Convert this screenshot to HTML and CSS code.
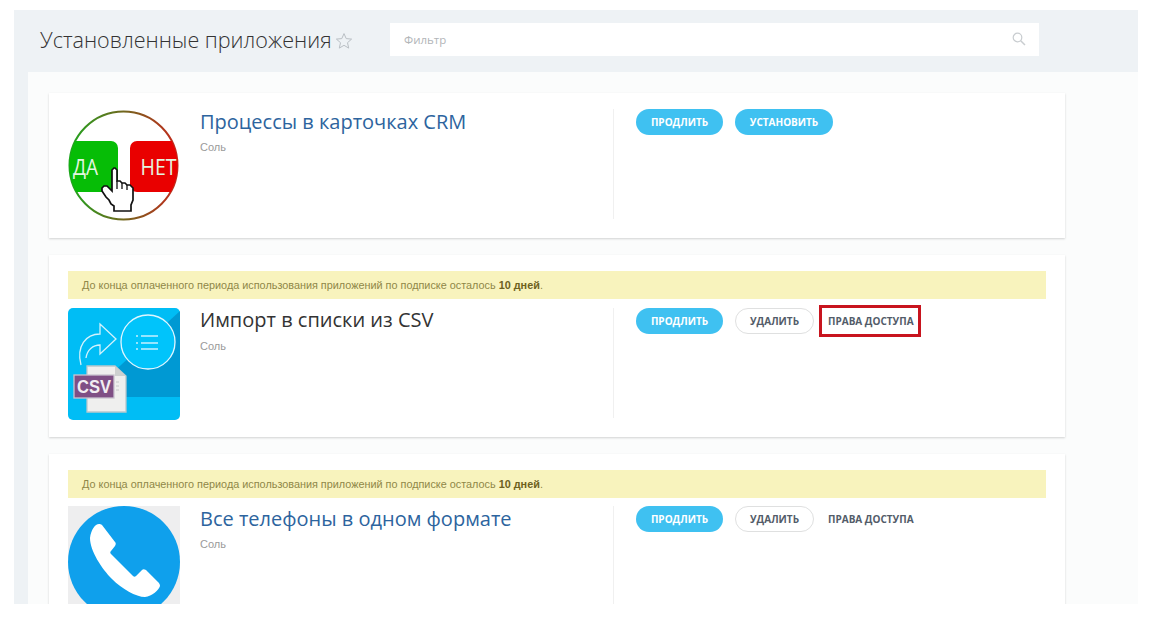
FILE: index.html
```html
<!DOCTYPE html>
<html lang="ru">
<head>
<meta charset="utf-8">
<title>Установленные приложения</title>
<link rel="stylesheet" href="styles.css">
</head>
<body>
<div class="window">
  <header class="top">
    <h1 class="page-title">Установленные приложения</h1>
    <svg class="star" viewBox="0 0 18 18" width="18" height="18"><path d="M9 1.6l2.2 5 5.4.5-4.1 3.6 1.2 5.4L9 13.300l-4.700 2.800 1.200-5.400L1.400 7.100l5.400-.5z" fill="none" stroke="#b9bfc4" stroke-width="1"/></svg>
    <div class="filter">
      <span class="filter-text">Фильтр</span>
      <svg class="search" viewBox="0 0 14 14" width="14" height="14"><circle cx="5.500" cy="5.500" r="4.300" fill="none" stroke="#c9cdd0" stroke-width="1.200"/><path d="M8.700 8.700l4.300 4.300" stroke="#c9cdd0" stroke-width="1.500"/></svg>
    </div>
  </header>
  <main class="content">
    <section class="card">
      <div class="row">
        <svg class="thumb" viewBox="0 0 112 112" width="112" height="112">
          <defs>
            <linearGradient id="ring" x1="0" x2="1" y1="0" y2="0"><stop offset="0" stop-color="#1fa51f"/><stop offset="1" stop-color="#c4281c"/></linearGradient>
            <clipPath id="disc"><circle cx="55.500" cy="56.500" r="54"/></clipPath>
          </defs>
          <circle cx="55.500" cy="56.500" r="54" fill="#fff" stroke="url(#ring)" stroke-width="2"/>
          <g clip-path="url(#disc)">
            <rect x="-10" y="32" width="60" height="51" rx="7" fill="#06bd06"/>
            <rect x="62" y="32" width="60" height="51" rx="7" fill="#e90000"/>
            <text x="5" y="66" class="yes-no" textLength="25" lengthAdjust="spacingAndGlyphs">ДА</text>
            <text x="72.500" y="66" class="yes-no" textLength="36" lengthAdjust="spacingAndGlyphs">НЕТ</text>
          </g>
          <path d="M44 82V61l2-2h1l2 2v11h3l2 2h3l2 2h3l3 3v12l-2 5v6H46v-5l-3-2-2-4-3-3-4-6v-3l2-2h3z" fill="#fff" stroke="#111" stroke-width="1.700" stroke-linejoin="miter"/>
          <path d="M49 72v8M54 74v6M59 76v5" fill="none" stroke="#111" stroke-width="1.300"/>
        </svg>
        <div class="info">
          <h2 class="app-name link">Процессы в карточках CRM</h2>
          <p class="vendor">Соль</p>
        </div>
        <div class="actions">
          <a class="btn btn-blue btn-renew">ПРОДЛИТЬ</a>
          <a class="btn btn-blue btn-install">УСТАНОВИТЬ</a>
        </div>
      </div>
    </section>
    <section class="card">
      <div class="notice">До конца оплаченного периода использования приложений по подписке осталось <b>10 дней</b>.</div>
      <div class="row">
        <svg class="thumb" viewBox="0 0 112 112" width="112" height="112">
          <rect width="112" height="112" rx="5" fill="#00bdf5"/>
          <path d="M112 3v86H18z" fill="#0099d3"/>
          <circle cx="80" cy="34" r="27" fill="#00c4fb" stroke="#dff6ff" stroke-width="1.300"/>
          <path d="M73 28h17M73 35h17M73 41h17" stroke="#c6f0ff" stroke-width="1.300"/>
          <path d="M68 28h2M68 35h2M68 41h2" stroke="#c6f0ff" stroke-width="1.600"/>
          <path d="M13 57C8 38 18 26 32 26V16l16 15-16 15v-9c-7 0-13 5-14 13" fill="none" stroke="#d3f2fc" stroke-width="1.300"/>
          <path d="M19 58h28l11 10v36H19z" fill="#efefee" stroke="#b9c7cc" stroke-width="1.300"/>
          <path d="M47 58v10h11z" fill="#cdd0d0"/>
          <path d="M48 74h3M48 78h3M48 82h3" stroke="#c5c8c8"/>
          <rect x="6" y="67" width="40" height="23" fill="#7f4f85" stroke="#c9c4cf" stroke-width="1.300"/>
          <text x="9" y="85" class="csv" textLength="34" lengthAdjust="spacingAndGlyphs">CSV</text>
        </svg>
        <div class="info info-high">
          <h2 class="app-name">Импорт в списки из CSV</h2>
          <p class="vendor">Соль</p>
        </div>
        <div class="actions">
          <a class="btn btn-blue btn-renew">ПРОДЛИТЬ</a>
          <a class="btn btn-outline">УДАЛИТЬ</a>
          <a class="btn-plain btn-marked">ПРАВА ДОСТУПА</a>
        </div>
      </div>
    </section>
    <section class="card">
      <div class="notice notice-tight">До конца оплаченного периода использования приложений по подписке осталось <b>10 дней</b>.</div>
      <div class="row">
        <svg class="thumb" viewBox="0 0 112 112" width="112" height="112">
          <rect width="112" height="112" fill="#eeeeef"/>
          <circle cx="56" cy="56" r="56" fill="#0fa0ec"/>
          <path d="M31 18c-4 0-8 6-9 14 0 13 12 31 22 41 10 10 24 18 33 18 7-1 14-7 15-11 0-2-1-3-2-4L78 64c-2-1-3-1-4 0l-6 6c-1 1-2 1-3 0L43 48c-1-1-1-2 0-3l4-5c1-2 1-3 0-4L34 19c-1-1-2-1-3-1z" fill="#fff"/>
        </svg>
        <div class="info">
          <h2 class="app-name link">Все телефоны в одном формате</h2>
          <p class="vendor">Соль</p>
        </div>
        <div class="actions">
          <a class="btn btn-blue btn-renew">ПРОДЛИТЬ</a>
          <a class="btn btn-outline">УДАЛИТЬ</a>
          <a class="btn-plain">ПРАВА ДОСТУПА</a>
        </div>
      </div>
    </section>
  </main>
</div>
</body>
</html>
```
FILE: styles.css
```css
* { box-sizing: border-box; }
html, body { margin: 0; height: 100%; background: #fff; overflow: hidden; }
body { padding: 10px 25px 23px 14px; font-family: "Open Sans", sans-serif; }
.window { height: 594px; background: #eef2f5; overflow: hidden; display: flex; flex-direction: column; }
.top { height: 62px; flex: none; display: flex; align-items: flex-start; padding: 13px 0 0 26px; }
.page-title { margin: 0; font-size: 21.550px; line-height: 33px; font-weight: 300; color: #333; width: 294px; white-space: nowrap; }
.star { margin: 9px 0 0 1px; flex: none; }
.filter { width: 649px; height: 33px; margin-left: 37px; background: #fff; display: flex; align-items: center; justify-content: space-between; padding: 0 14px; }
.filter-text { font: 11.500px/16px "Open Sans", sans-serif; color: #b2b5b8; }
.search { margin-right: -1px; margin-top: -2px; }
.content { flex: 1; margin-left: 14px; background: #fbfcfc; padding: 21px 73px 0 21px; display: flex; flex-direction: column; gap: 17px; }
.card { background: #fff; flex: none; width: 1016px; padding: 16px 19px 17px 19px; box-shadow: 0 1px 2px rgba(0,0,0,.17); }
.notice { height: 28px; background: #f8f3bd; margin-bottom: 9px; padding-left: 14px; font: 10.850px/28px "Liberation Sans", sans-serif; color: #8f8748; white-space: nowrap; }
.notice-tight { margin-bottom: 8px; }
.notice b { color: #6e6120; }
.row { display: flex; height: 112px; }
.thumb { flex: none; display: block; }
.info { width: 414px; height: 110px; margin-left: 20px; padding-top: 1px; border-right: 1px solid #f0f0f0; }
.info-high { padding-top: 0; }
.app-name { margin: 0; font-size: 20px; line-height: 24px; font-weight: 400; color: #333; white-space: nowrap; }
.app-name.link { color: #2d649e; }
.vendor { margin: 6px 0 0; font: 11px/15px "Liberation Sans", sans-serif; color: #9a9a9a; }
.info-high .vendor { margin-top: 7px; }
.actions { display: flex; align-items: flex-start; padding-left: 22px; gap: 12px; }
.btn { height: 26px; border-radius: 13px; font: 700 10px/26px "Open Sans", sans-serif; text-align: center; white-space: nowrap; }
.btn-blue { background: #3fc1f1; color: #fff; }
.btn-renew { width: 87px; }
.btn-install { width: 98px; }
.btn-outline { width: 79px; border: 1px solid #dfe0e0; line-height: 24px; color: #535c69; background: #fff; }
.btn-plain { height: 26px; margin-left: 2px; font: 700 10px/26px "Open Sans", sans-serif; color: #535c69; white-space: nowrap; }
.btn-marked { outline: 3px solid #c8141e; outline-offset: 3px; padding: 0 1px 0 3px; height: 20px; line-height: 20px; margin: 3px 0 0 -1px; }
.yes-no { font: 400 21px "Open Sans", sans-serif; fill: #e4f5e0; }
.csv { font: 700 18px "Liberation Sans", sans-serif; fill: #f1edf2; }
```
